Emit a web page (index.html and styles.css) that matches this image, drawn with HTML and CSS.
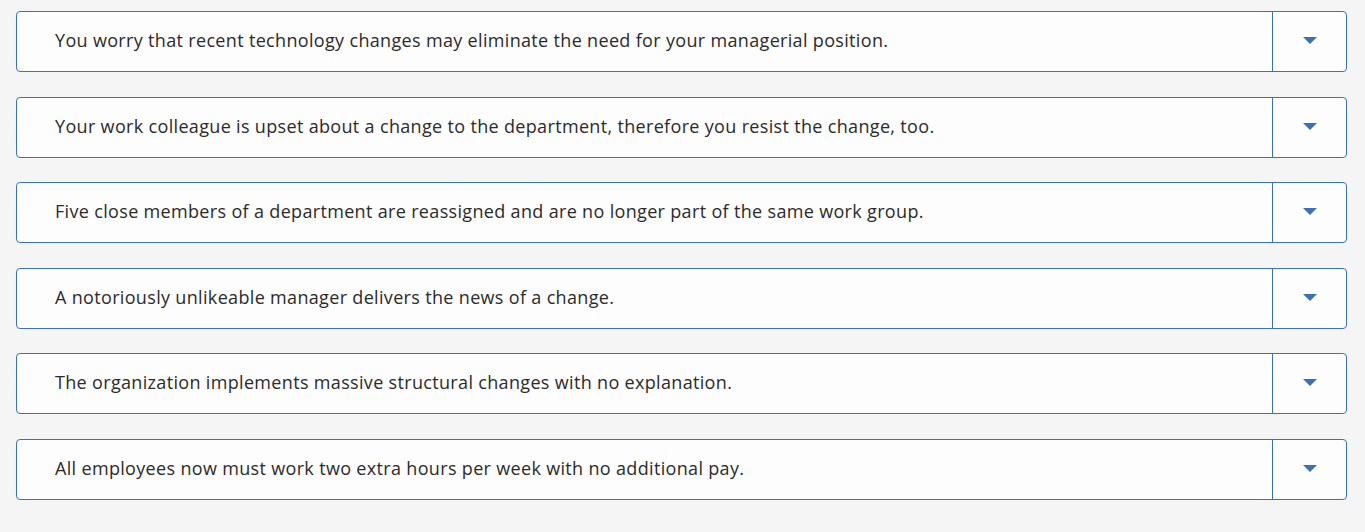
FILE: index.html
```html
<!DOCTYPE html>
<html>
<head>
<meta charset="utf-8">
<link rel="stylesheet" href="styles.css">
</head>
<body>
<div class="list">
  <div class="row"><div class="label">You worry that recent technology changes may eliminate the need for your managerial position.</div><div class="toggle"><span class="caret"></span></div></div>
  <div class="row"><div class="label">Your work colleague is upset about a change to the department, therefore you resist the change, too.</div><div class="toggle"><span class="caret"></span></div></div>
  <div class="row"><div class="label">Five close members of a department are reassigned and are no longer part of the same work group.</div><div class="toggle"><span class="caret"></span></div></div>
  <div class="row"><div class="label">A notoriously unlikeable manager delivers the news of a change.</div><div class="toggle"><span class="caret"></span></div></div>
  <div class="row"><div class="label">The organization implements massive structural changes with no explanation.</div><div class="toggle"><span class="caret"></span></div></div>
  <div class="row"><div class="label">All employees now must work two extra hours per week with no additional pay.</div><div class="toggle"><span class="caret"></span></div></div>
</div>
</body>
</html>
```

FILE: styles.css
```css
html, body {
  margin: 0;
  padding: 0;
  background: #f5f5f5;
}
body {
  font-family: "Open Sans", Lato, sans-serif;
  color: #2b2b2b;
}
.list {
  display: flex;
  flex-direction: column;
  gap: 24.6px;
  padding: 11px 18px 0 16px;
}
.row {
  display: flex;
  height: 61px;
  box-sizing: border-box;
  border: 1px solid #3a72ba;
  border-radius: 4px;
  background: #fdfdfd;
}
.label {
  flex: 1;
  display: flex;
  align-items: center;
  padding-left: 38px;
  padding-bottom: 3px;
  font-size: 18px;
  letter-spacing: 0.33px;
  line-height: 1;
}
.toggle {
  width: 73px;
  border-left: 1px solid #3a72ba;
  display: flex;
  align-items: center;
  justify-content: center;
}
.caret {
  width: 0;
  height: 0;
  margin-bottom: 2px;
  border-left: 7px solid transparent;
  border-right: 7px solid transparent;
  border-top: 7px solid #3a72ba;
}
```
